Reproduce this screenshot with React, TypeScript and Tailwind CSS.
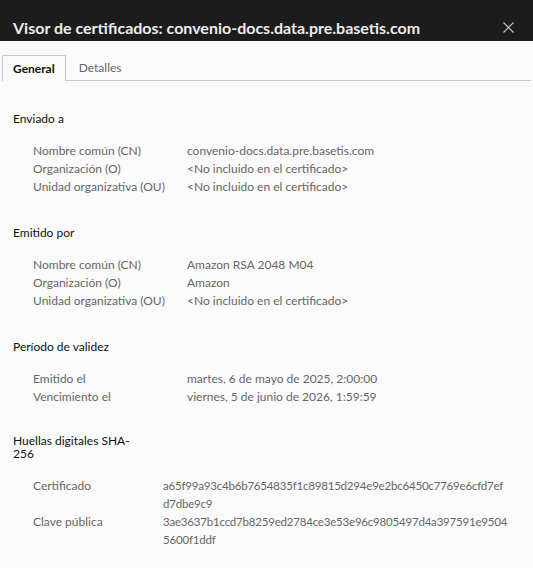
const font = { fontFamily: 'Lato, "Noto Sans", sans-serif' }

type Row = [string, string[]]

function Section({
  title,
  rows,
  labelWidth = 'grid-cols-[154px_1fr]',
  titleClass = '',
  valueClass = '',
  gapClass = 'mt-[14px]',
}: {
  title: string
  rows: Row[]
  labelWidth?: string
  titleClass?: string
  valueClass?: string
  gapClass?: string
}) {
  return (
    <section className="mb-[28px]">
      <h2 className={`text-[12px] text-[#111] ${titleClass}`}>{title}</h2>
      <div className={`${gapClass} ml-[20px] grid ${labelWidth} text-[12px] leading-[18px] text-[#666]`}>
        {rows.map(([k, v]) => (
          <div key={k} className="contents">
            <div>{k}</div>
            <div className={valueClass}>
              {v.map((line) => (
                <div key={line} className="whitespace-nowrap">{line}</div>
              ))}
            </div>
          </div>
        ))}
      </div>
    </section>
  )
}

export default function App() {
  return (
    <div className="w-[533px] h-[568px] bg-[#fafafa] overflow-hidden" style={font}>
      <header className="h-[41px] bg-[#1c1c1c] flex items-end justify-between pl-[13px] pr-[19px] pb-[2px]">
        <h1 className="text-[16px] font-bold text-[#ececec] leading-[22px]">
          Visor de certificados: convenio-docs.data.pre.basetis.com
        </h1>
        <svg width="11" height="11" viewBox="0 0 11 11" className="mb-[6px]">
          <path d="M0.5 0.5L10.5 10.5M10.5 0.5L0.5 10.5" stroke="#c4c4c4" strokeWidth="1.2" />
        </svg>
      </header>

      <nav className="mt-[14px] mx-[2px] flex border-b border-[#c8c8c8] h-[26px]">
        <div className="px-[10px] border border-b-0 border-[#c8c8c8] bg-[#fafafa] -mb-px text-[12px] font-bold text-[#111] leading-[26px]">
          General
        </div>
        <div className="px-[13px] text-[12px] text-[#666] leading-[26px]">Detalles</div>
      </nav>

      <main className="px-[13px] pt-[29px]">
        <Section
          title="Enviado a"
          rows={[
            ['Nombre común (CN)', ['convenio-docs.data.pre.basetis.com']],
            ['Organización (O)', ['<No incluido en el certificado>']],
            ['Unidad organizativa (OU)', ['<No incluido en el certificado>']],
          ]}
        />
        <Section
          title="Emitido por"
          rows={[
            ['Nombre común (CN)', ['Amazon RSA 2048 M04']],
            ['Organización (O)', ['Amazon']],
            ['Unidad organizativa (OU)', ['<No incluido en el certificado>']],
          ]}
        />
        <Section
          title="Período de validez"
          rows={[
            ['Emitido el', ['martes, 6 de mayo de 2025, 2:00:00']],
            ['Vencimiento el', ['viernes, 5 de junio de 2026, 1:59:59']],
          ]}
        />
        <Section
          title="Huellas digitales SHA-256"
          titleClass="w-[125px] leading-[13px] mt-[5px]"
          labelWidth="grid-cols-[130px_1fr]"
          gapClass="mt-[17px]"
          valueClass="text-[11.5px] tracking-[-0.2px]"
          rows={[
            ['Certificado', ['a65f99a93c4b6b7654835f1c89815d294e9e2bc6450c7769e6cfd7ef', 'd7dbe9c9']],
            ['Clave pública', ['3ae3637b1ccd7b8259ed2784ce3e53e96c9805497d4a397591e9504', '5600f1ddf']],
          ]}
        />
      </main>
    </div>
  )
}
